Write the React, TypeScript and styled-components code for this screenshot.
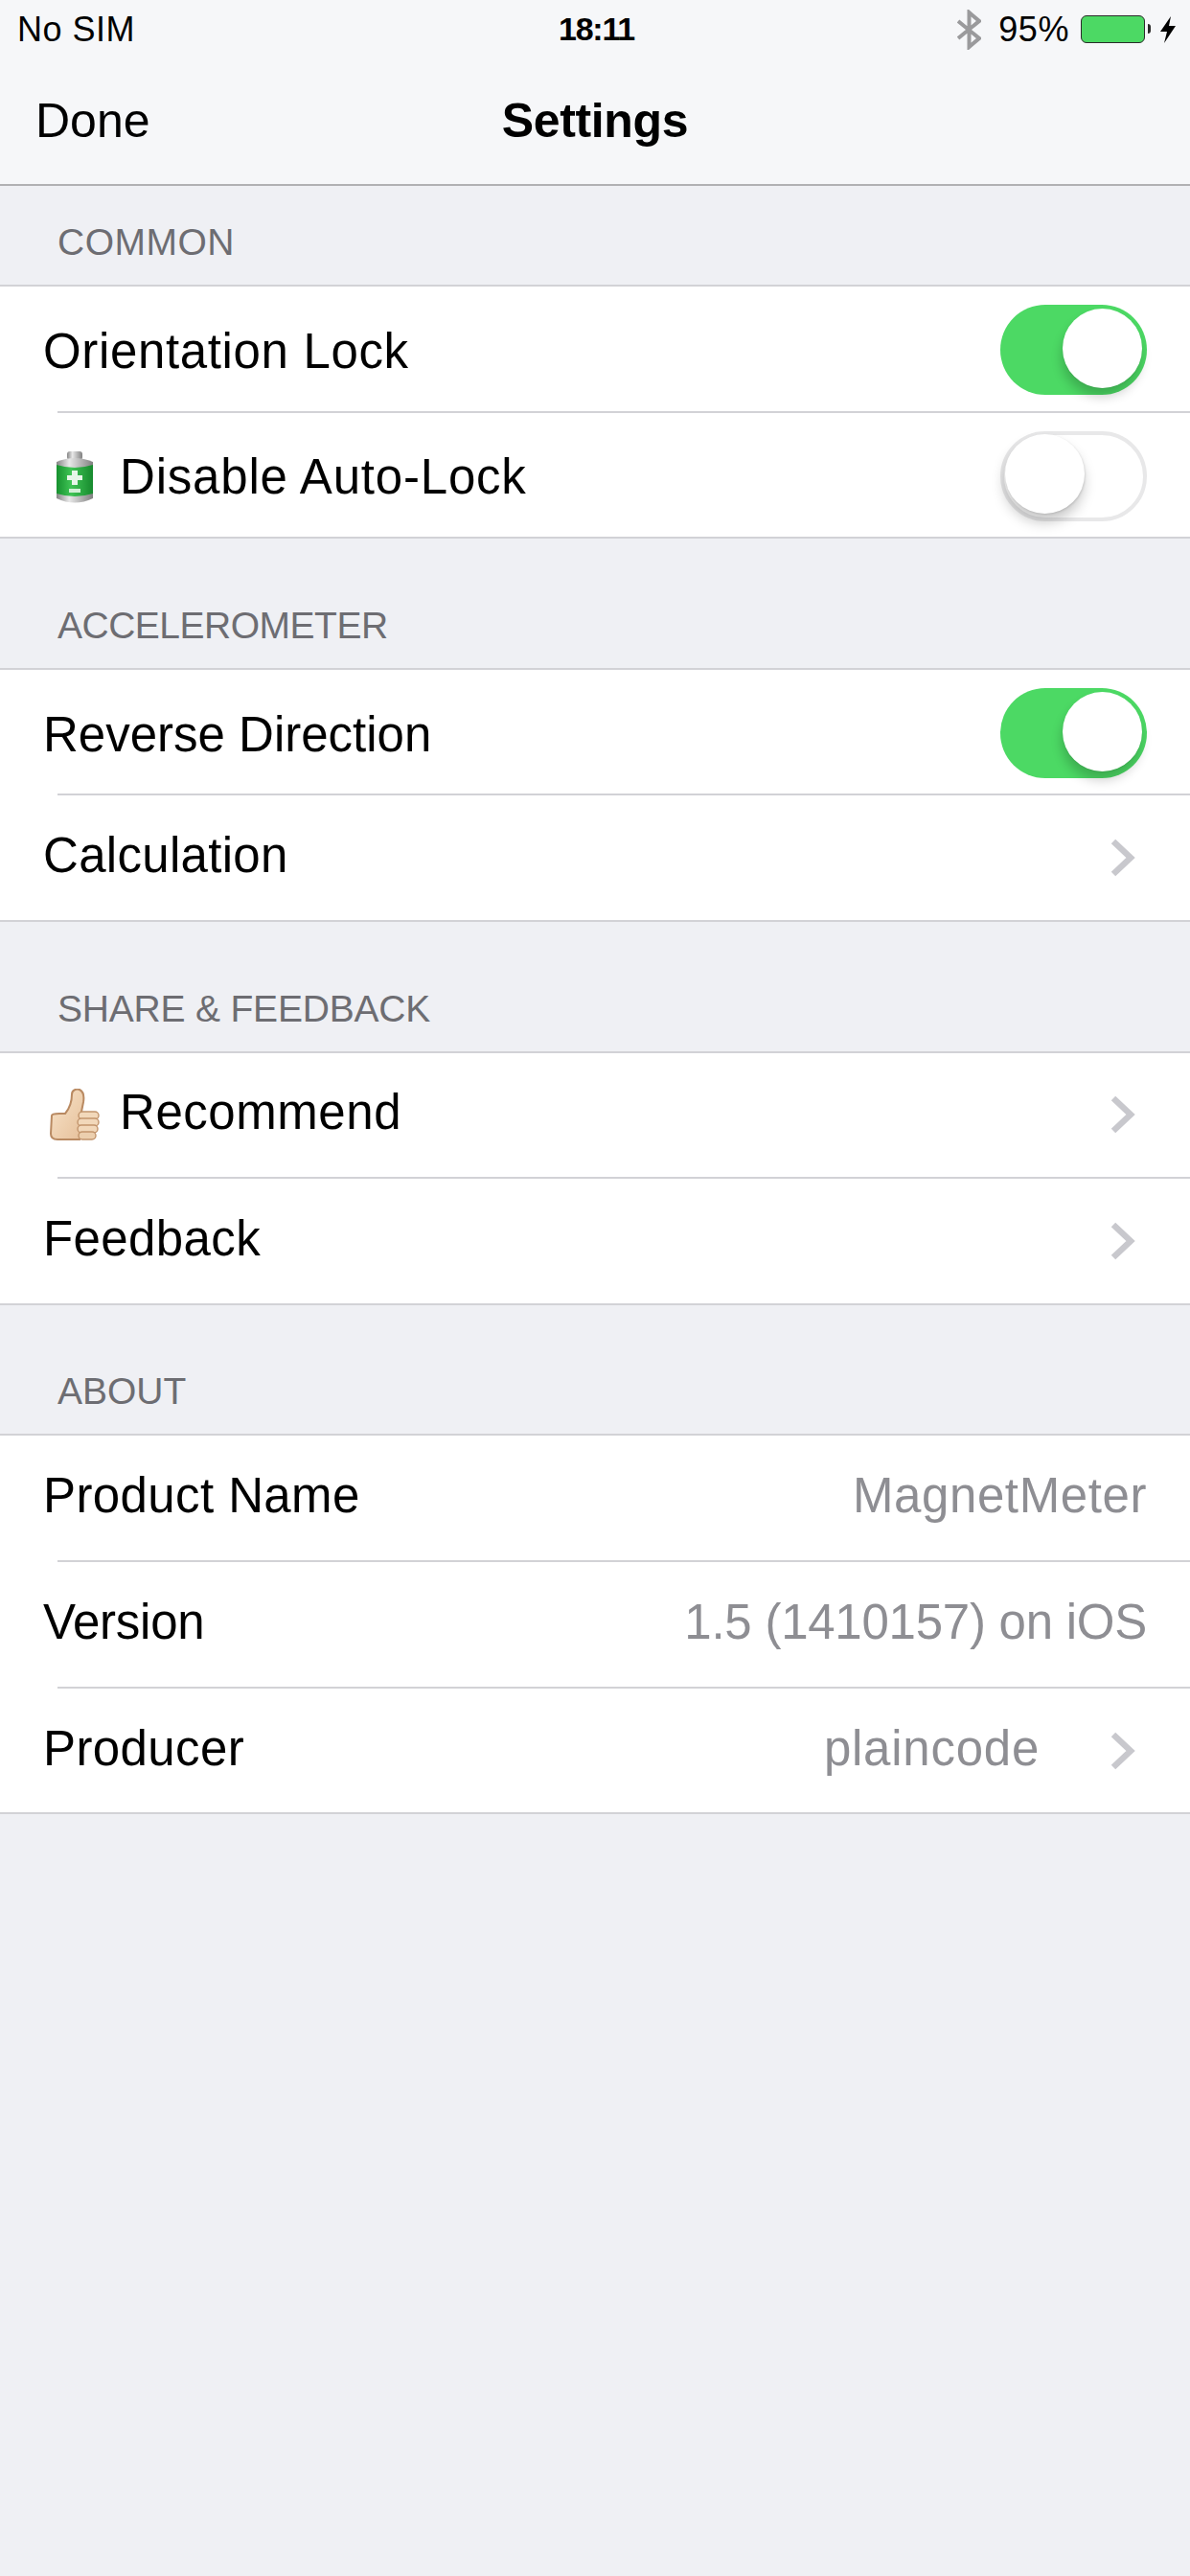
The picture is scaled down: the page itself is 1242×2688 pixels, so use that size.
import React from 'react';
import styled, { createGlobalStyle } from 'styled-components';

const GlobalStyle = createGlobalStyle`
  html, body {
    margin: 0;
    padding: 0;
    background: #eff0f4;
  }
  body {
    font-family: 'Liberation Sans', Arial, sans-serif;
  }
`;

const Screen = styled.div`
  width: 1242px;
  height: 2688px;
  background: #eff0f4;
  overflow: hidden;
`;

const TopBar = styled.header`
  height: 192px;
  background: #f6f7f9;
  border-bottom: 2px solid #b1b1b3;
`;

const StatusBar = styled.div`
  height: 60px;
  display: grid;
  grid-template-columns: 1fr auto 1fr;
  align-items: center;
  padding: 1px 15px 0 18px;
  box-sizing: border-box;
  font-size: 36px;
  line-height: 59px;
  color: #000;
`;

const Carrier = styled.span`
  letter-spacing: 0.5px;
`;

const Clock = styled.span`
  font-weight: 700;
  font-size: 34px;
  letter-spacing: -1.2px;
`;

const StatusRight = styled.div`
  display: flex;
  align-items: center;
  justify-content: flex-end;
`;

const Percent = styled.span`
  margin: 0 12px 0 18px;
  letter-spacing: 0.6px;
`;

const Battery = styled.div`
  width: 67px;
  height: 29px;
  box-sizing: border-box;
  border: 1.5px solid #2a2a2a;
  border-radius: 6px;
  background: #4cd964;
  position: relative;
  margin-right: 16px;

  &::after {
    content: '';
    position: absolute;
    right: -7px;
    top: 8px;
    width: 3px;
    height: 10px;
    background: #2a2a2a;
    border-radius: 0 4px 4px 0;
  }
`;

const NavBar = styled.nav`
  height: 132px;
  display: grid;
  grid-template-columns: 1fr auto 1fr;
  align-items: center;
  padding: 0 37px;
  box-sizing: border-box;
  font-size: 50px;
  line-height: 60px;
  color: #000;
`;

const NavTitle = styled.span`
  font-weight: 700;
  letter-spacing: -0.35px;
`;

const SectionTitle = styled.h2<{ $tracking: number }>`
  margin: 0;
  height: 103px;
  box-sizing: border-box;
  padding: 0 0 22px 60px;
  display: flex;
  align-items: flex-end;
  font-size: 39px;
  line-height: 44px;
  font-weight: 400;
  color: #6d6d72;
  letter-spacing: ${props => props.$tracking}px;
`;

const Section = styled.section<{ $first?: boolean }>`
  padding-top: ${props => (props.$first ? '0' : '31.5px')};
`;

const Group = styled.div`
  background: #fff;
  border-top: 2px solid #d2d2d6;
  border-bottom: 2px solid #d2d2d6;
`;

const Row = styled.div<{ $hasSwitch: boolean }>`
  height: 129.67px;
  display: flex;
  align-items: center;
  padding: ${props => (props.$hasSwitch ? '3px 45px 0' : '0 45px 4px')};
  box-sizing: border-box;
`;

const Separator = styled.div`
  height: 2px;
  margin-left: 60px;
  background: #d2d2d6;
`;

const IconSlot = styled.span`
  width: 80px;
  display: flex;
  justify-content: center;
  margin: 4px 7px 0 -7px;
`;

const Label = styled.span<{ $tracking: number; $lowered: boolean }>`
  font-size: 51px;
  line-height: 60px;
  color: #000;
  flex: 1;
  margin-top: ${props => (props.$lowered ? '3px' : '0')};
  letter-spacing: ${props => props.$tracking}px;
`;

const Value = styled.span<{ $tracking: number }>`
  font-size: 51px;
  line-height: 60px;
  color: #8e8e93;
  letter-spacing: ${props => props.$tracking}px;
`;

const ChevronWrap = styled.span`
  display: flex;
  margin: 4px 12px 0 74px;
`;

const SwitchTrack = styled.div<{ $on: boolean }>`
  width: 153px;
  height: 94px;
  box-sizing: border-box;
  border-radius: 47px;
  position: relative;
  background: ${props => (props.$on ? '#4cd964' : '#fff')};
  border: ${props => (props.$on ? 'none' : '4px solid #e8e8e9')};
`;

const SwitchKnob = styled.div<{ $on: boolean }>`
  position: absolute;
  width: 83px;
  height: 83px;
  border-radius: 50%;
  background: #fff;
  top: ${props => (props.$on ? '4px' : '-1px')};
  ${props => (props.$on ? 'right: 5px;' : 'left: 1px;')}
  box-shadow: ${props =>
    props.$on
      ? '-1px 9px 12px rgba(0, 0, 0, 0.2), 0 1px 1px rgba(0, 0, 0, 0.06)'
      : '-1px 9px 14px rgba(0, 0, 0, 0.22), 1px 1px 2px rgba(0, 0, 0, 0.1)'};
`;

const Chevron = () => (
  <svg width="26" height="40" viewBox="0 0 26 40">
    <path d="M3 3 L21 20 L3 37" fill="none" stroke="#c8c8cd" strokeWidth="6.5" />
  </svg>
);

const BluetoothIcon = () => (
  <svg width="25" height="42" viewBox="0 0 25 42">
    <path d="M1 12 L23 30 L12.5 39 L12.5 3 L23 12 L1 30" fill="none" stroke="#9a9a9c" strokeWidth="4" />
  </svg>
);

const BoltIcon = () => (
  <svg width="16" height="28" viewBox="0 0 16 28">
    <path d="M11 0 L0 16 L7 16 L4 28 L16 10 L9 10 Z" fill="#000" />
  </svg>
);

const BatteryEmoji = () => (
  <svg width="40" height="56" viewBox="0 0 40 56">
    <defs>
      <linearGradient id="metal" x1="0" x2="1" y1="0" y2="0">
        <stop offset="0" stopColor="#858585" />
        <stop offset="0.35" stopColor="#e8e8e8" />
        <stop offset="1" stopColor="#808080" />
      </linearGradient>
      <linearGradient id="cell" x1="0" x2="1" y1="0" y2="0">
        <stop offset="0" stopColor="#17912f" />
        <stop offset="0.4" stopColor="#3fc455" />
        <stop offset="1" stopColor="#178a2e" />
      </linearGradient>
    </defs>
    <rect x="12" y="0" width="16" height="9" rx="3" fill="url(#metal)" />
    <path d="M1 11 Q20 3 39 11 L39 49 Q20 58 1 49 Z" fill="url(#metal)" />
    <path d="M1 14 Q20 20 39 14 L39 44 Q20 50 1 44 Z" fill="url(#cell)" />
    <path d="M17 20 h6 v5 h5 v5 h-5 v5 h-6 v-5 h-5 v-5 h5 Z" fill="#e6f6e8" />
    <rect x="14" y="39" width="12" height="4" fill="#d2efd6" />
  </svg>
);

const ThumbEmoji = () => (
  <svg width="52" height="54" viewBox="0 0 52 54">
    <defs>
      <linearGradient id="skin" x1="0" x2="1" y1="0" y2="1">
        <stop offset="0" stopColor="#f8e4ca" />
        <stop offset="1" stopColor="#e6c09a" />
      </linearGradient>
    </defs>
    <path
      d="M2 28 C2 27 5 26 10 26 L16 26 C21 20 23 15 23 6 C23 1 28 0 31 1 C35 3 36 8 35 14 L33 24 L31 53 L8 53 C4 53 1 51 1 47 Z"
      fill="url(#skin)"
      stroke="#b98a62"
      strokeWidth="2"
    />
    <rect x="30" y="24" width="21" height="8" rx="4" fill="#f2d8ba" stroke="#c2946c" strokeWidth="1.4" />
    <rect x="29" y="31" width="22" height="8" rx="4" fill="#f2d8ba" stroke="#c2946c" strokeWidth="1.4" />
    <rect x="29" y="38" width="21" height="8" rx="4" fill="#f2d8ba" stroke="#c2946c" strokeWidth="1.4" />
    <rect x="30" y="45" width="18" height="8" rx="4" fill="#eccfae" stroke="#c2946c" strokeWidth="1.4" />
  </svg>
);

type RowData = {
  label: string;
  tracking: number;
  icon?: React.ReactNode;
  toggle?: boolean;
  value?: string;
  valueTracking?: number;
  chevron?: boolean;
};

const sections: { title: string; tracking: number; rows: RowData[] }[] = [
  {
    title: 'COMMON',
    tracking: 0.5,
    rows: [
      { label: 'Orientation Lock', tracking: 0.65, toggle: true },
      { label: 'Disable Auto-Lock', tracking: 0.8, icon: <BatteryEmoji />, toggle: false },
    ],
  },
  {
    title: 'ACCELEROMETER',
    tracking: -0.5,
    rows: [
      { label: 'Reverse Direction', tracking: 0, toggle: true },
      { label: 'Calculation', tracking: 0.3, chevron: true },
    ],
  },
  {
    title: 'SHARE & FEEDBACK',
    tracking: -0.2,
    rows: [
      { label: 'Recommend', tracking: 0.55, icon: <ThumbEmoji />, chevron: true },
      { label: 'Feedback', tracking: 0.4, chevron: true },
    ],
  },
  {
    title: 'ABOUT',
    tracking: 0,
    rows: [
      { label: 'Product Name', tracking: 0.4, value: 'MagnetMeter', valueTracking: 0.6 },
      { label: 'Version', tracking: -0.25, value: '1.5 (1410157) on iOS', valueTracking: -0.25 },
      { label: 'Producer', tracking: 0.4, value: 'plaincode', valueTracking: 0.75, chevron: true },
    ],
  },
];

const App: React.FC = () => {
  return (
    <Screen>
      <GlobalStyle />
      <TopBar>
        <StatusBar>
          <Carrier>No SIM</Carrier>
          <Clock>18:11</Clock>
          <StatusRight>
            <BluetoothIcon />
            <Percent>95%</Percent>
            <Battery />
            <BoltIcon />
          </StatusRight>
        </StatusBar>
        <NavBar>
          <span>Done</span>
          <NavTitle>Settings</NavTitle>
          <span />
        </NavBar>
      </TopBar>
      {sections.map((section, i) => (
        <Section key={section.title} $first={i === 0}>
          <SectionTitle $tracking={section.tracking}>{section.title}</SectionTitle>
          <Group>
            {section.rows.map((row, j) => (
              <React.Fragment key={row.label}>
                {j > 0 && <Separator />}
                <Row $hasSwitch={row.toggle !== undefined}>
                  {row.icon && <IconSlot>{row.icon}</IconSlot>}
                  <Label $tracking={row.tracking} $lowered={row.toggle !== undefined}>
                    {row.label}
                  </Label>
                  {row.value && <Value $tracking={row.valueTracking ?? 0}>{row.value}</Value>}
                  {row.chevron && (
                    <ChevronWrap>
                      <Chevron />
                    </ChevronWrap>
                  )}
                  {row.toggle !== undefined && (
                    <SwitchTrack $on={row.toggle}>
                      <SwitchKnob $on={row.toggle} />
                    </SwitchTrack>
                  )}
                </Row>
              </React.Fragment>
            ))}
          </Group>
        </Section>
      ))}
    </Screen>
  );
};

export default App;
